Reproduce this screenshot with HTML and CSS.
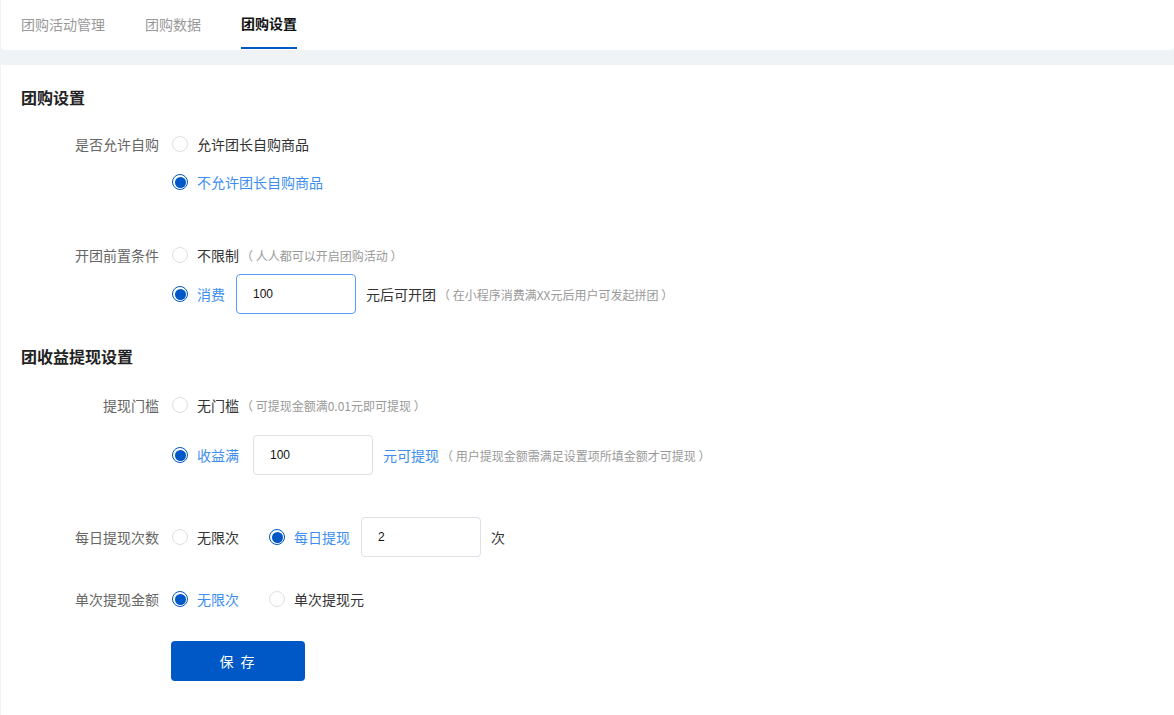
FILE: index.html
```html
<!DOCTYPE html>
<html lang="zh">
<head>
<meta charset="utf-8">
<title>团购设置</title>
<link rel="stylesheet" href="styles.css">
</head>
<body>
<div class="page">
  <div class="tabs">
    <div class="tab">团购活动管理</div>
    <div class="tab">团购数据</div>
    <div class="tab active">团购设置</div>
  </div>
  <div class="content">
    <h2 class="section-title">团购设置</h2>

    <div class="form-item item-1">
      <div class="label">是否允许自购</div>
      <div class="options">
        <div class="line">
          <span class="radio"></span><span class="opt">允许团长自购商品</span>
        </div>
        <div class="line">
          <span class="radio checked"></span><span class="opt sel">不允许团长自购商品</span>
        </div>
      </div>
    </div>

    <div class="form-item item-2">
      <div class="label">开团前置条件</div>
      <div class="options">
        <div class="line">
          <span class="radio"></span><span class="opt">不限制</span><span class="hint">（ 人人都可以开启团购活动 ）</span>
        </div>
        <div class="line tall">
          <span class="radio checked"></span><span class="opt sel">消费</span>
          <span class="input focus g11">100</span>
          <span class="unit">元后可开团</span><span class="hint">（ 在小程序消费满XX元后用户可发起拼团 ）</span>
        </div>
      </div>
    </div>

    <h2 class="section-title title-2">团收益提现设置</h2>

    <div class="form-item item-3">
      <div class="label">提现门槛</div>
      <div class="options">
        <div class="line">
          <span class="radio"></span><span class="opt">无门槛</span><span class="hint">（ 可提现金额满0.01元即可提现 ）</span>
        </div>
        <div class="line tall sep">
          <span class="radio checked"></span><span class="opt sel">收益满</span>
          <span class="input g14">100</span>
          <span class="unit sel">元可提现</span><span class="hint">（ 用户提现金额需满足设置项所填金额才可提现 ）</span>
        </div>
      </div>
    </div>

    <div class="form-item item-4">
      <div class="label">每日提现次数</div>
      <div class="options">
        <div class="line tall">
          <span class="radio"></span><span class="opt">无限次</span>
          <span class="radio second checked"></span><span class="opt sel">每日提现</span>
          <span class="input g11">2</span>
          <span class="unit">次</span>
        </div>
      </div>
    </div>

    <div class="form-item item-5">
      <div class="label">单次提现金额</div>
      <div class="options">
        <div class="line">
          <span class="radio checked"></span><span class="opt sel">无限次</span>
          <span class="radio second"></span><span class="opt">单次提现元</span>
        </div>
      </div>
    </div>

    <div class="actions">
      <button class="btn-save" type="button">保 存</button>
    </div>
  </div>
</div>
</body>
</html>
```

FILE: styles.css
```css
* { box-sizing: border-box; }
html, body { margin: 0; padding: 0; }
body {
  background: #f0f3f6;
  font-family: "Noto Sans CJK SC", "Noto Sans", "Liberation Sans", sans-serif;
  font-size: 14px;
  color: #333;
}
.page {
  padding-left: 1px;
}
.tabs {
  display: flex;
  height: 50px;
  background: #fff;
  border-radius: 0 0 4px 4px;
  padding-left: 20px;
  gap: 40px;
}
.tab {
  height: 50px;
  line-height: 48px;
  color: #999;
  font-size: 14px;
  border-bottom: 2px solid transparent;
}
.tab.active {
  color: #111;
  font-weight: 700;
  border-bottom: 2px solid #0058c6;
  height: 49px;
  line-height: 47px;
}
.content {
  margin-top: 15px;
  background: #fff;
  min-height: 660px;
  padding: 21px 20px 30px;
}
.section-title {
  margin: 0;
  font-size: 16px;
  font-weight: 700;
  line-height: 22px;
  color: #222;
}
.title-2 { margin-top: 31px; }
.form-item {
  display: flex;
}
.item-1 { margin-top: 17px; }
.item-2 { margin-top: 35px; }
.item-3 { margin-top: 19px; }
.item-4 { margin-top: 42px; }
.item-5 { margin-top: 23px; }
.label {
  width: 138px;
  flex: none;
  text-align: right;
  color: #666;
  line-height: 38px;
  height: 38px;
  margin-right: 13px;
}
.item-4 .label { line-height: 40px; height: 40px; }
.options {
  display: flex;
  flex-direction: column;
}
.line {
  display: flex;
  align-items: center;
  height: 38px;
}
.line.tall { height: 40px; }
.line.sep { margin-top: 11px; }
.radio {
  width: 16px;
  height: 16px;
  border-radius: 50%;
  border: 1px solid #dcdfe6;
  background: #fff;
  flex: none;
  position: relative;
  margin-right: 9px;
}
.radio.checked {
  border-color: #0058c6;
}
.radio.checked::after {
  content: "";
  position: absolute;
  left: 1.5px;
  top: 1.5px;
  width: 11px;
  height: 11px;
  border-radius: 50%;
  background: #0058c6;
}
.radio.second { margin-left: 30px; }
.opt { color: #333; white-space: nowrap; }
.sel { color: #3d8ef0; }
.hint {
  font-size: 12px;
  color: #999;
  white-space: nowrap;
  margin-left: 2px;
}
.input {
  width: 120px;
  height: 40px;
  border: 1px solid #dcdfe6;
  border-radius: 4px;
  padding-left: 16px;
  font-size: 12px;
  line-height: 38px;
  color: #111;
  flex: none;
  font-family: "Liberation Sans", sans-serif;
}
.input.focus { border-color: #5a9cf8; }
.g11 { margin-left: 11px; }
.g14 { margin-left: 14px; }
.unit { margin-left: 10px; white-space: nowrap; }
.actions {
  margin-top: 23px;
  padding-left: 150px;
}
.btn-save {
  width: 134px;
  height: 40px;
  border: none;
  border-radius: 4px;
  background: #0058c6;
  color: #fff;
  font-family: "Noto Sans CJK SC", sans-serif;
  font-size: 14px;
  letter-spacing: 2px;
  cursor: pointer;
}
```
